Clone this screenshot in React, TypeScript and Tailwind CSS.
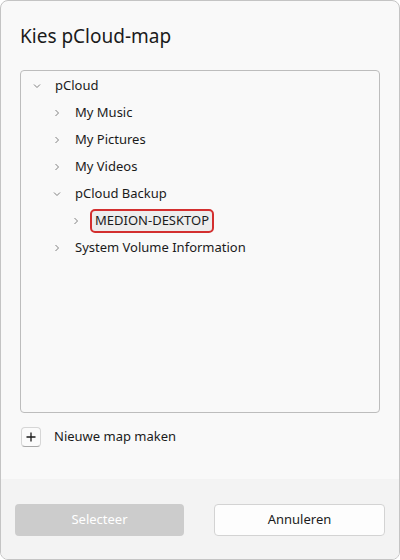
import React from 'react';

type Node = { label: string; depth: number; open?: boolean; selected?: boolean };

const nodes: Node[] = [
  { label: 'pCloud', depth: 0, open: true },
  { label: 'My Music', depth: 1 },
  { label: 'My Pictures', depth: 1 },
  { label: 'My Videos', depth: 1 },
  { label: 'pCloud Backup', depth: 1, open: true },
  { label: 'MEDION-DESKTOP', depth: 2, selected: true },
  { label: 'System Volume Information', depth: 1 },
];

const indent = ['pl-[12px]', 'pl-[32px]', 'pl-[51px]'];

function Chevron({ open }: { open?: boolean }) {
  return (
    <svg width="8" height="8" viewBox="0 0 8 8" className="shrink-0">
      {open ? (
        <path d="M1 2.5 L4 5.5 L7 2.5" fill="none" stroke="#808080" strokeWidth="1" />
      ) : (
        <path d="M2.5 1 L5.5 4 L2.5 7" fill="none" stroke="#808080" strokeWidth="1" />
      )}
    </svg>
  );
}

export default function App() {
  return (
    <div
      className="w-[400px] h-[560px] bg-[#f9f9f9] border border-[#c4c4c4] rounded-[8px] flex flex-col overflow-hidden text-[#1b1b1b]"
      style={{ fontFamily: '"Noto Sans", "Open Sans", sans-serif' }}
    >
      <div className="flex-1 flex flex-col px-[19px] pt-[22px]">
        <h1 className="text-[19px] leading-[26px] text-[#1b1b1b] font-normal">Kies pCloud-map</h1>
        <div className="mt-[21px] h-[343px] bg-[#f9f9f9] border border-[#bdbdbd] rounded-[4px] pt-[1px]">
          {nodes.map((n) => (
            <div key={n.label} className={`h-[27px] flex items-center ${indent[n.depth]}`}>
              <Chevron open={n.open} />
              {n.selected ? (
                <span className="ml-[10px] px-[3px] h-[24px] flex items-center border-2 border-[#d32f2f] rounded-[5px] bg-[#ededed] text-[13px] text-[#1b1b1b]">
                  {n.label}
                </span>
              ) : (
                <span className="ml-[14px] text-[13px] text-[#1b1b1b]">{n.label}</span>
              )}
            </div>
          ))}
        </div>
        <div className="mt-[14px] flex items-center">
          <div className="ml-[1px] w-[20px] h-[20px] bg-[#fbfbfb] border border-[#d6d6d6] border-b-[#a8a8a8] rounded-[4px] flex items-center justify-center">
            <svg width="10" height="10" viewBox="0 0 10 10">
              <path d="M5 0.5 V9.5 M0.5 5 H9.5" stroke="#1b1b1b" strokeWidth="1.3" />
            </svg>
          </div>
          <span className="ml-[13px] text-[13px] text-[#1b1b1b]">Nieuwe map maken</span>
        </div>
      </div>
      <div className="h-[80px] bg-[#f3f3f3] flex items-center gap-[30px] px-[14px] pt-[2px]">
        <button className="flex-1 h-[32px] rounded-[4px] bg-[#cccccc] text-white text-[13px]">Selecteer</button>
        <button className="flex-1 h-[32px] rounded-[4px] bg-[#fdfdfd] border border-[#d3d3d3] text-[13px] text-[#1b1b1b]">
          Annuleren
        </button>
      </div>
    </div>
  );
}
